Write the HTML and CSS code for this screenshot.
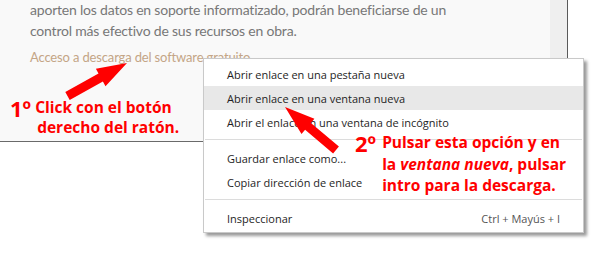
FILE: index.html
```html
<!DOCTYPE html>
<html lang="es">

<head>
    <meta charset="UTF-8">
    <meta name="viewport" content="width=device-width, initial-scale=1.0">
    <title>Descarga</title>
    <link rel="stylesheet" href="styles.css">
</head>

<body>
    <div class="page">
        <div class="content">
            <p class="text">aporten los datos en soporte informatizado, podrán beneficiarse de un<br>control más efectivo de sus recursos en obra.</p>
            <a class="link" href="#">Acceso a descarga del software gratuito</a>
        </div>
        <div class="track"></div>
    </div>

    <ul class="menu">
        <li class="item">Abrir enlace en una pestaña nueva</li>
        <li class="item hover">Abrir enlace en una ventana nueva</li>
        <li class="item">Abrir el enlace en una ventana de incógnito</li>
        <li class="sep"></li>
        <li class="item">Guardar enlace como...</li>
        <li class="item">Copiar dirección de enlace</li>
        <li class="sep"></li>
        <li class="item"><span>Inspeccionar</span><span class="key">Ctrl + Mayús + I</span></li>
    </ul>

    <div class="note note-one">
        <span class="num">1º</span>
        <div class="lines">
            <span>Click con el botón</span>
            <span class="indent">derecho del ratón.</span>
        </div>
    </div>

    <div class="note note-two">
        <span class="num">2º</span>
        <div class="lines">
            <span>Pulsar esta opción y en</span>
            <span>la <i>ventana nueva</i>, pulsar</span>
            <span>intro para la descarga.</span>
        </div>
    </div>

    <!-- flechas rojas -->
    <svg class="arrows" width="609" height="254" viewBox="0 0 609 254">
        <polygon points="127,63 105.5,86.3 102.9,81.4 69.7,99.9 65.3,92.1 98.5,73.6 95.9,68.7" />
        <polygon points="285,107 314.4,118.7 310.9,122.9 338.9,146.6 333.1,153.4 305.1,129.8 301.5,134" />
    </svg>
</body>

</html>
```

FILE: styles.css
```css
* {
    padding: 0;
    margin: 0;
    box-sizing: border-box;
}

body {
    width: 609px;
    height: 254px;
    overflow: hidden;
    background-color: #fff;
    font-family: Lato, sans-serif;
    position: relative;
}

.page {
    display: flex;
    width: 568px;
    height: 142px;
    background-color: #f9f9f9;
    border-right: 1px solid #5a5a5a;
    border-bottom: 1px solid #6a6a6a;
}

.content {
    flex: 1;
    padding-left: 30px;
}

.text {
    margin-top: -1px;
    font-size: 14px;
    letter-spacing: -0.2px;
    line-height: 21px;
    color: #777;
}

.link {
    display: block;
    margin-top: 6px;
    font-size: 13px;
    letter-spacing: -0.15px;
    line-height: 20px;
    color: #c4a586;
    text-decoration: none;
}

.track {
    width: 17px;
    background-color: #efefef;
}

/* menu contextual */

.menu {
    position: absolute;
    top: 58px;
    left: 203px;
    width: 381px;
    padding: 3px 0 2px;
    list-style: none;
    background-color: #fff;
    border: 1px solid #c9c9c9;
    box-shadow: 3px 3px 3px rgba(0, 0, 0, 0.4);
    font-family: "Open Sans", sans-serif;
    font-size: 11px;
    color: #1e1e1e;
}

.menu .item {
    display: flex;
    justify-content: space-between;
    height: 24px;
    align-items: center;
    padding: 0 23px 0 23px;
}

.menu .item.hover {
    background-color: #e8e8e8;
}

.menu .key {
    color: #555;
}

.menu .sep {
    height: 1px;
    margin: 5px 1px 6px;
    background-color: #dcdcdc;
}

/* notas en rojo */

.note {
    position: absolute;
    display: flex;
    color: #f00;
    font-family: "Open Sans", sans-serif;
    font-weight: bold;
    font-size: 15.5px;
    line-height: 20px;
}

.note .num {
    font-size: 22px;
    line-height: 22px;
}

.note .lines {
    display: flex;
    flex-direction: column;
}

.note-one {
    top: 97px;
    left: 10px;
    gap: 4px;
}

.note-one .indent {
    padding-left: 2px;
}

.note-two {
    top: 132px;
    left: 355px;
    gap: 6px;
}

.note-two .lines {
    line-height: 21.5px;
}

.arrows {
    position: absolute;
    top: 0;
    left: 0;
}

.arrows polygon {
    fill: #f00;
}
```
